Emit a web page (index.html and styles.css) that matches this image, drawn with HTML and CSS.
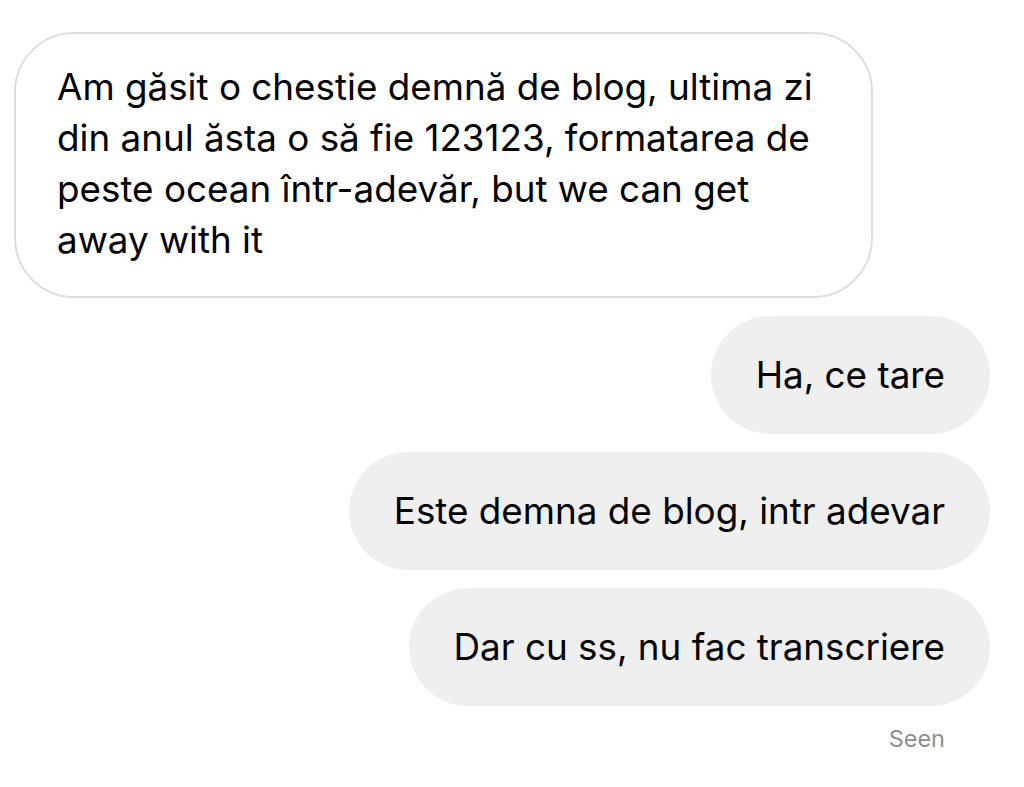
FILE: index.html
```html
<!DOCTYPE html>
<html lang="ro">
<head>
    <meta charset="UTF-8">
    <meta name="viewport" content="width=device-width, initial-scale=1.0">
    <title>Chat</title>
    <link rel="stylesheet" href="styles.css">
</head>
<body>
    <div class="thread">
        <div class="bubble received">
            Am găsit o chestie demnă de blog, ultima zi din anul ăsta o să fie 123123, formatarea de peste ocean într-adevăr, but we can get away with it
        </div>
        <div class="bubble sent">Ha, ce tare</div>
        <div class="bubble sent">Este demna de blog, intr adevar</div>
        <div class="bubble sent">Dar cu ss, nu fac transcriere</div>
        <div class="seen">Seen</div>
    </div>
</body>
</html>
```

FILE: styles.css
```css
body {
    margin: 0;
    background-color: #fff;
    font-family: 'Inter', 'Liberation Sans', sans-serif;
    color: #000;
}

.thread {
    display: flex;
    flex-direction: column;
    gap: 18px;
    padding: 32px 34px 0 14px;
}

.bubble {
    font-size: 36.8px;
    line-height: 51px;
    padding: 33px 45px 34px;
    border-radius: 60px;
    box-sizing: border-box;
}

.received {
    align-self: flex-start;
    width: 859px;
    padding: 27px 44px 31px 41px;
    border: 2px solid #dedede;
}

.sent {
    align-self: flex-end;
    background-color: #efefef;
}

.seen {
    align-self: flex-end;
    margin: 0 45px 0 0;
    font-size: 23.5px;
    color: #8e8e8e;
}
```
